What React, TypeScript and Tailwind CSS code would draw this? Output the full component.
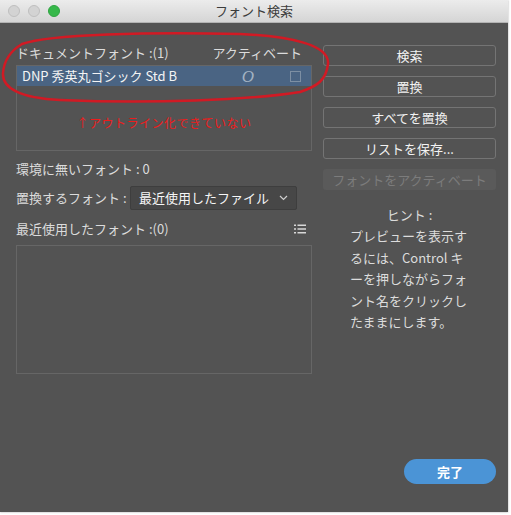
import React from 'react';

const jp = { fontFamily: '"Noto Sans CJK JP", "Noto Sans", sans-serif' };

function DialogButton({ label, disabled }: { label: string; disabled?: boolean }) {
    if (disabled) {
        return (
            <div className="h-[21px] flex items-center justify-center rounded-[3px] bg-[#5a5a5a] text-[13px] text-[#7c7c7c]">
                {label}
            </div>
        );
    }
    return (
        <button className="h-[21px] flex items-center justify-center rounded-[3px] border border-[#747474] bg-[#535353] text-[13px] text-[#f2f2f2]">
            {label}
        </button>
    );
}

function ListIcon() {
    return (
        <svg width="12" height="10" viewBox="0 0 12 10" className="text-[#d8d8d8]">
            <rect x="0" y="0.5" width="2" height="1.5" fill="currentColor" />
            <rect x="3.5" y="0.5" width="8.5" height="1.5" fill="currentColor" />
            <rect x="0" y="4.25" width="2" height="1.5" fill="currentColor" />
            <rect x="3.5" y="4.25" width="8.5" height="1.5" fill="currentColor" />
            <rect x="0" y="8" width="2" height="1.5" fill="currentColor" />
            <rect x="3.5" y="8" width="8.5" height="1.5" fill="currentColor" />
        </svg>
    );
}

export default function App() {
    return (
        <div className="relative w-[511px] h-[515px] bg-white" style={jp}>
            <div className="w-[508px] h-[512px] flex flex-col bg-[#535353] shadow-[0_0_2px_rgba(0,0,0,0.35)]">
                {/* Title bar */}
                <div className="relative h-[23px] shrink-0 flex items-center justify-center bg-gradient-to-b from-[#ececec] to-[#d5d5d5] border-b border-[#b3b3b3]">
                    <div className="absolute left-[8px] top-[5px] flex gap-[8px]">
                        <span className="w-[12px] h-[12px] rounded-full bg-[#d3d3d3] border border-[#bfbfbf]" />
                        <span className="w-[12px] h-[12px] rounded-full bg-[#d3d3d3] border border-[#bfbfbf]" />
                        <span className="w-[12px] h-[12px] rounded-full bg-[#36b84a] border border-[#2fa441]" />
                    </div>
                    <span className="text-[13px] text-[#3c3c3c]">フォント検索</span>
                </div>

                <div className="flex-1 flex flex-col">
                    <div className="flex">
                        {/* Left column */}
                        <div className="ml-[16px] w-[296px] pt-[20px] flex flex-col text-[13px] text-[#dcdcdc]">
                            <div className="h-[20px] flex items-center justify-between pr-[10px]">
                                <span>ドキュメントフォント :(1)</span>
                                <span>アクティベート</span>
                            </div>
                            <div className="mt-[2px] h-[86px] border border-[#666666] flex flex-col">
                                <div className="h-[20px] flex items-center bg-[#4a6483] pl-[5px] pr-[10px] text-[#f4f4f4]">
                                    <span className="flex-1">DNP 秀英丸ゴシック Std B</span>
                                    <span
                                        className="mr-[36px] italic text-[17px] text-[#a3b2c2] leading-none"
                                        style={{ fontFamily: '"Liberation Serif", serif' }}
                                    >
                                        O
                                    </span>
                                    <span className="w-[11px] h-[11px] border border-[#7d8fa3]" />
                                </div>
                                <div className="flex-1 flex items-center justify-center pt-[10px] text-[12px] tracking-[0.5px] text-[#ee1c1c]">
                                    ↑アウトライン化できていない
                                </div>
                            </div>
                            <div className="mt-[8px] h-[20px] flex items-center">環境に無いフォント : 0</div>
                            <div className="mt-[7px] h-[24px] flex items-center">
                                <span className="w-[114px]">置換するフォント :</span>
                                <div className="w-[167px] h-[24px] flex items-center justify-between pl-[8px] pr-[8px] rounded-[2px] bg-[#474747] border border-[#3e3e3e] text-[#f6f6f6]">
                                    <span>最近使用したファイル</span>
                                    <svg width="9" height="6" viewBox="0 0 9 6">
                                        <path d="M1 1l3.5 3.5L8 1" fill="none" stroke="#cfcfcf" strokeWidth="1.2" />
                                    </svg>
                                </div>
                            </div>
                            <div className="mt-[9px] h-[20px] flex items-center justify-between pr-[6px]">
                                <span>最近使用したフォント :(0)</span>
                                <ListIcon />
                            </div>
                            <div className="mt-[6px] h-[129px] border border-[#666666]" />
                        </div>

                        {/* Right column */}
                        <div className="ml-[11px] w-[173px] pt-[22px] flex flex-col">
                            <div className="flex flex-col gap-[10px]">
                                <DialogButton label="検索" />
                                <DialogButton label="置換" />
                                <DialogButton label="すべてを置換" />
                                <DialogButton label="リストを保存..." />
                                <DialogButton label="フォントをアクティベート" disabled />
                            </div>
                            <div className="mt-[17px] text-center text-[13px] leading-[16px] text-[#dcdcdc]">ヒント :</div>
                            <p className="mt-[2px] pl-[27px] text-[13px] leading-[21.5px] text-[#dcdcdc]">
                                プレビューを表示す
                                <br />
                                るには、Control キ
                                <br />
                                ーを押しながらフォ
                                <br />
                                ント名をクリックし
                                <br />
                                たままにします。
                            </p>
                        </div>
                    </div>

                    <div className="flex-1" />
                    <div className="flex justify-end pr-[12px] pb-[28px]">
                        <button className="w-[92px] h-[25px] rounded-full bg-[#4b94d6] text-[13px] font-bold text-white">
                            完了
                        </button>
                    </div>
                </div>
            </div>

            {/* Red hand-drawn annotation loop */}
            <svg className="absolute left-0 top-0 pointer-events-none" width="511" height="515" viewBox="0 0 511 515">
                <path
                    d="M22 44 C50 34, 150 32, 240 34 C290 36, 330 45, 328 64 C326 80, 318 86, 300 92 C250 100, 150 104, 60 100 C20 98, 2 88, 3 73 C4 60, 12 50, 22 44"
                    fill="none"
                    stroke="#d11a24"
                    strokeWidth="2.5"
                    strokeLinecap="round"
                />
            </svg>
        </div>
    );
}
